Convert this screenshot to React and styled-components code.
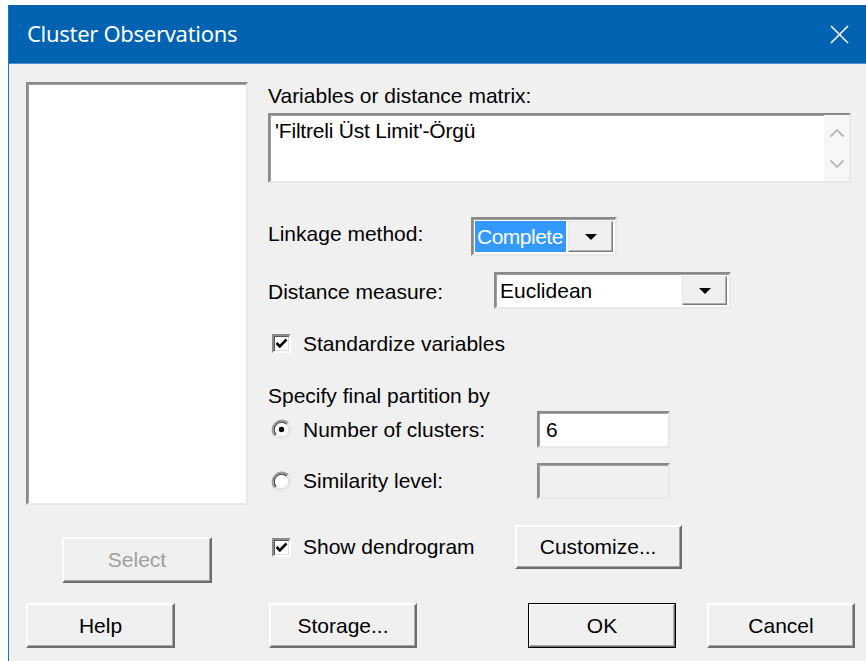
import React from "react";
import styled, { createGlobalStyle } from "styled-components";

const GlobalStyle = createGlobalStyle`
  html, body {
    margin: 0;
    padding: 0;
    background: #ffffff;
    overflow: hidden;
  }
  body {
    font-family: "Liberation Sans", Arial, sans-serif;
  }
`;

const sunken = `
  border: 2px solid;
  border-color: #8a8a8a #e8e8e8 #e8e8e8 #8a8a8a;
  box-shadow: inset 1px 1px 0 #a0a0a0;
`;

const raised = `
  border: 2px solid;
  border-color: #ffffff #6d6d6d #6d6d6d #ffffff;
  box-shadow: inset -1px -1px 0 #a8a8a8;
`;

const Window = styled.div`
  margin: 5px 0 0 8px;
  height: calc(100vh - 5px);
  border-left: 1px solid #1f74c2;
  background: #f0f0f0;
  display: flex;
  flex-direction: column;
`;

const TitleBar = styled.div`
  height: 58px;
  flex-shrink: 0;
  background: #0063b1;
  border-bottom: 1px solid #4d8fd0;
  display: flex;
  align-items: center;
  justify-content: space-between;
  padding: 0 17px 0 18px;
`;

const Title = styled.span`
  color: #ffffff;
  font-family: "Noto Sans", "Open Sans", sans-serif;
  font-size: 22px;
  letter-spacing: -0.3px;
  margin-top: -2px;
`;

const Client = styled.div`
  padding: 18px 0 0 17px;
  color: #000;
  font-size: 21px;
`;

const Body = styled.div`
  display: flex;
`;

const LeftCol = styled.div`
  width: 222px;
  display: flex;
  flex-direction: column;
`;

const ListBox = styled.div`
  ${sunken}
  background: #ffffff;
  height: 423px;
  box-sizing: border-box;
`;

const RightCol = styled.div`
  margin-left: 20px;
  width: 583px;
  display: flex;
  flex-direction: column;
`;

const Label = styled.div`
  line-height: 24px;
  margin-top: ${(p) => p.$mt || 0}px;
  white-space: nowrap;
`;

const TextArea = styled.div`
  ${sunken}
  margin-top: 5px;
  height: 70px;
  box-sizing: border-box;
  background: #ffffff;
  display: flex;
`;

const AreaText = styled.div`
  flex: 1;
  padding: 4px 0 0 5px;
  line-height: 24px;
  letter-spacing: -0.2px;
`;

const ScrollStrip = styled.div`
  width: 25px;
  background: #f7f7f7;
  display: flex;
  flex-direction: column;
  align-items: center;
  justify-content: space-around;
  padding: 2px 0;
`;

const Row = styled.div`
  display: flex;
  align-items: center;
  margin-top: ${(p) => p.$mt || 0}px;
  height: ${(p) => p.$h}px;
`;

const RowLabel = styled.div`
  width: ${(p) => p.$w}px;
  flex-shrink: 0;
  white-space: nowrap;
  margin-top: ${(p) => p.$dy || 0}px;
`;

const Combo = styled.div`
  ${sunken}
  width: ${(p) => p.$w}px;
  height: 100%;
  box-sizing: border-box;
  background: #ffffff;
  display: flex;
  align-items: stretch;
  padding: 2px;
`;

const ComboValue = styled.div`
  flex: ${(p) => (p.$selected ? "0 0 auto" : 1)};
  width: ${(p) => (p.$selected ? "91px" : "auto")};
  margin-right: ${(p) => (p.$selected ? "auto" : 0)};
  background: ${(p) => (p.$selected ? "#3399ff" : "transparent")};
  color: ${(p) => (p.$selected ? "#ffffff" : "#000")};
  letter-spacing: ${(p) => (p.$selected ? "-0.5px" : "0")};
  padding-left: 2px;
  display: flex;
  align-items: center;
  box-sizing: border-box;
  white-space: nowrap;
  overflow: hidden;
`;

const DropButton = styled.div`
  border: 1px solid;
  border-color: #e8e8e8 #7a7a7a #7a7a7a #e8e8e8;
  box-shadow: inset -1px -1px 0 #b0b0b0;
  width: 45px;
  box-sizing: border-box;
  background: #f0f0f0;
  display: flex;
  align-items: center;
  justify-content: center;
`;

const Check = styled.div`
  display: flex;
  align-items: center;
  margin-left: 4px;
  gap: 12px;
  white-space: nowrap;
`;

const Box = styled.div`
  width: 19px;
  height: 19px;
  box-sizing: border-box;
  border: 2px solid;
  border-color: #8a8a8a #ffffff #ffffff #8a8a8a;
  box-shadow: inset 1px 1px 0 #5a5a5a, inset -1px -1px 0 #dcdcdc;
  background: #ffffff;
  display: flex;
  align-items: center;
  justify-content: center;
`;

const Field = styled.div`
  ${sunken}
  width: 133px;
  height: 100%;
  box-sizing: border-box;
  margin-left: auto;
  margin-right: 181px;
  background: ${(p) => (p.$disabled ? "#f0f0f0" : "#ffffff")};
  display: flex;
  align-items: center;
  padding-left: 7px;
`;

const RadioWrap = styled.div`
  display: flex;
  align-items: center;
  margin-left: 3px;
  gap: 11px;
  white-space: nowrap;
`;

const Button = styled.button`
  ${raised}
  font-family: "Liberation Sans", Arial, sans-serif;
  font-size: 21px;
  background: #f0f0f0;
  color: ${(p) => (p.disabled ? "#a0a0a0" : "#000")};
  width: ${(p) => p.$w}px;
  height: ${(p) => p.$h || 45}px;
  margin-left: ${(p) => p.$ml || 0}px;
  margin-top: ${(p) => p.$mt || 0}px;
  padding: 0;
  flex-shrink: 0;
  cursor: default;
  ${(p) =>
    p.$default &&
    `
    outline: 1px solid #000;
    outline-offset: -1px;
  `}
`;

const ButtonRow = styled.div`
  display: flex;
  margin-top: 20px;
`;

const CheckMark = () => (
  <svg width="13" height="11" viewBox="0 0 13 11">
    <path d="M1.5 5 L4.8 8.3 L11.5 1.5" fill="none" stroke="#000" strokeWidth="2.6" />
  </svg>
);

const Radio = ({ checked }) => (
  <svg width="21" height="21" viewBox="0 0 21 21">
    <circle cx="10.5" cy="10.5" r="9.5" fill="#ffffff" />
    <path d="M3.8 17.2 A9.5 9.5 0 0 1 17.2 3.8" fill="none" stroke="#9a9a9a" strokeWidth="1.8" />
    <path d="M5.2 15.8 A7.5 7.5 0 0 1 15.8 5.2" fill="none" stroke="#4a4a4a" strokeWidth="1.3" />
    <path d="M17.2 3.8 A9.5 9.5 0 0 1 3.8 17.2" fill="none" stroke="#e4e4e4" strokeWidth="1.5" />
    <path d="M15.8 5.2 A7.5 7.5 0 0 1 5.2 15.8" fill="none" stroke="#d6d6d6" strokeWidth="1" />
    {checked && <circle cx="10.5" cy="10.5" r="2.7" fill="#000" />}
  </svg>
);

const Arrow = () => (
  <svg width="14" height="8" viewBox="0 0 14 8">
    <path d="M1 1 L7 7 L13 1 Z" fill="#000" />
  </svg>
);

const Chevron = ({ up }) => (
  <svg width="16" height="10" viewBox="0 0 16 10">
    <path
      d={up ? "M1.5 8.5 L8 2 L14.5 8.5" : "M1.5 1.5 L8 8 L14.5 1.5"}
      fill="none"
      stroke="#b8b8b8"
      strokeWidth="1.8"
    />
  </svg>
);

const CloseIcon = () => (
  <svg width="19" height="19" viewBox="0 0 19 19">
    <path d="M1 1 L18 18 M18 1 L1 18" stroke="#ffffff" strokeWidth="1.6" />
  </svg>
);

export default function App() {
  return (
    <>
      <GlobalStyle />
      <Window>
        <TitleBar>
          <Title>Cluster Observations</Title>
          <CloseIcon />
        </TitleBar>
        <Client>
          <Body>
            <LeftCol>
              <ListBox />
              <Button disabled $w={150} $h={46} $ml={36} $mt={32}>
                Select
              </Button>
            </LeftCol>
            <RightCol>
              <Label $mt={2}>Variables or distance matrix:</Label>
              <TextArea>
                <AreaText>'Filtreli Üst Limit'-Örgü</AreaText>
                <ScrollStrip>
                  <Chevron up />
                  <Chevron />
                </ScrollStrip>
              </TextArea>

              <Row $mt={34} $h={39}>
                <RowLabel $w={203} $dy={-6}>Linkage method:</RowLabel>
                <Combo $w={146}>
                  <ComboValue $selected>Complete</ComboValue>
                  <DropButton>
                    <Arrow />
                  </DropButton>
                </Combo>
              </Row>

              <Row $mt={16} $h={37}>
                <RowLabel $w={226} $dy={2}>Distance measure:</RowLabel>
                <Combo $w={237}>
                  <ComboValue>Euclidean</ComboValue>
                  <DropButton>
                    <Arrow />
                  </DropButton>
                </Combo>
              </Row>

              <Row $mt={25} $h={19}>
                <Check>
                  <Box>
                    <CheckMark />
                  </Box>
                  Standardize variables
                </Check>
              </Row>

              <Label $mt={31}>Specify final partition by</Label>

              <Row $mt={3} $h={37}>
                <RadioWrap>
                  <Radio checked />
                  Number of clusters:
                </RadioWrap>
                <Field>6</Field>
              </Row>

              <Row $mt={15} $h={36}>
                <RadioWrap>
                  <Radio />
                  Similarity level:
                </RadioWrap>
                <Field $disabled />
              </Row>

              <Row $mt={26} $h={44}>
                <Check>
                  <Box>
                    <CheckMark />
                  </Box>
                  Show dendrogram
                </Check>
                <Button $w={167} $h={44} $ml={40}>
                  Customize...
                </Button>
              </Row>
            </RightCol>
          </Body>

          <ButtonRow>
            <Button $w={149}>Help</Button>
            <Button $w={148} $ml={94}>
              Storage...
            </Button>
            <Button $w={148} $ml={111} $default>
              OK
            </Button>
            <Button $w={148} $ml={31}>
              Cancel
            </Button>
          </ButtonRow>
        </Client>
      </Window>
    </>
  );
}
